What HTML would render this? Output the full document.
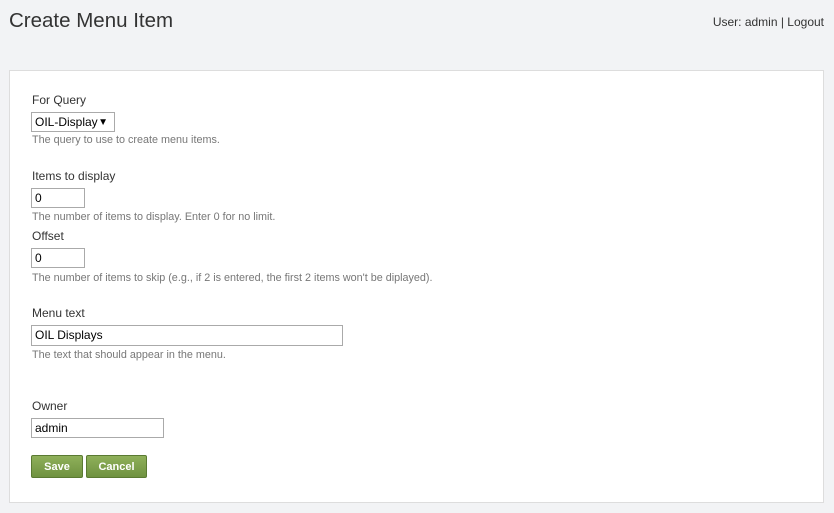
<!DOCTYPE html>
<html><head><style>
body{margin:0;width:834px;height:513px;background:#f2f3f5;font-family:"Liberation Sans",sans-serif;position:relative;overflow:hidden;color:#333}
.a{position:absolute;white-space:nowrap}
h1{position:absolute;left:9px;top:9px;margin:0;font-weight:normal;font-size:20.5px;color:#333}
.panel{position:absolute;left:9px;top:70px;width:813px;height:431px;background:#fff;border:1px solid #ddd}
.l{font-size:12px;color:#333}
.h{font-size:10.8px;color:#777}
.in{position:absolute;border:1px solid #aaa;background:#fff;font-size:12px;padding-left:3px;box-sizing:border-box;line-height:18px;color:#000}
.btn{position:absolute;top:455px;height:23px;background:linear-gradient(#8fb05a,#6f9240);border:1px solid #5a7a32;border-radius:2px;color:#fff;font-weight:bold;font-size:11px;text-align:center;line-height:22px;box-sizing:border-box}
</style></head><body>
<h1>Create Menu Item</h1>
<div class="a" style="right:10px;top:15px;font-size:12px">User: admin | <span style="color:#333">Logout</span></div>
<div class="panel"></div>
<div class="a l" style="left:32px;top:93px">For Query</div>
<div class="in" style="left:31px;top:112px;width:84px;height:20px">OIL-Display <span style="font-size:10px;position:absolute;right:6px;top:1px">▼</span></div>
<div class="a h" style="left:32px;top:134px">The query to use to create menu items.</div>
<div class="a l" style="left:32px;top:169px">Items to display</div>
<div class="in" style="left:31px;top:188px;width:54px;height:20px">0</div>
<div class="a h" style="left:32px;top:211px">The number of items to display. Enter 0 for no limit.</div>
<div class="a l" style="left:32px;top:229px">Offset</div>
<div class="in" style="left:31px;top:248px;width:54px;height:20px">0</div>
<div class="a h" style="left:32px;top:272px">The number of items to skip (e.g., if 2 is entered, the first 2 items won't be diplayed).</div>
<div class="a l" style="left:32px;top:306px">Menu text</div>
<div class="in" style="left:31px;top:325px;width:312px;height:21px">OIL Displays</div>
<div class="a h" style="left:32px;top:349px">The text that should appear in the menu.</div>
<div class="a l" style="left:32px;top:399px">Owner</div>
<div class="in" style="left:31px;top:418px;width:133px;height:20px">admin</div>
<div class="btn" style="left:31px;width:52px">Save</div>
<div class="btn" style="left:86px;width:61px">Cancel</div>
</body></html>
